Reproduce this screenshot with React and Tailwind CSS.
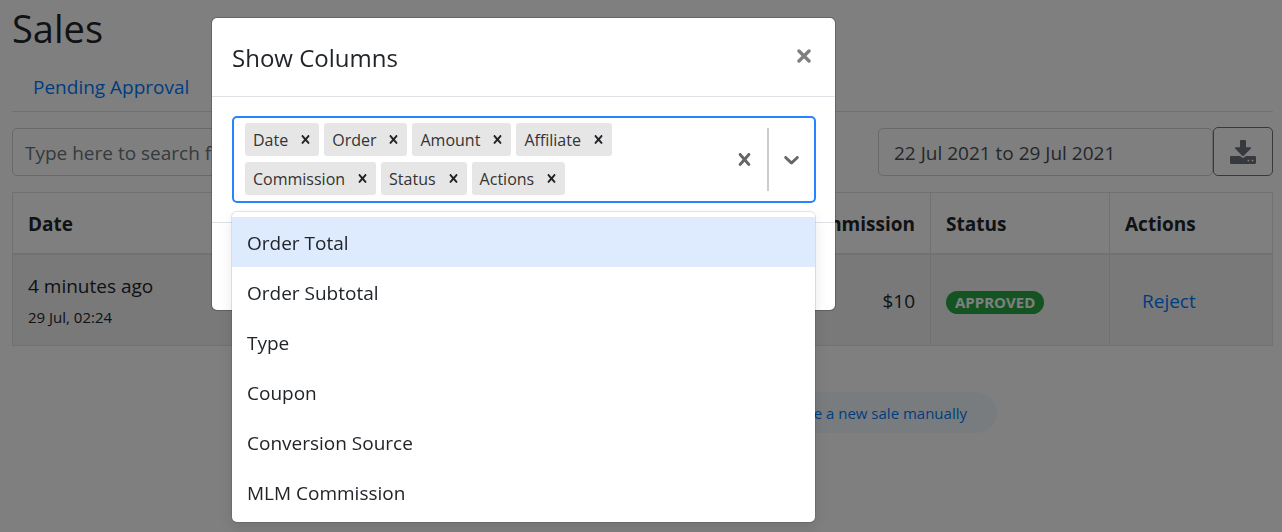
const CROSS =
  "M14.348 14.849c-0.469 0.469-1.229 0.469-1.697 0l-2.651-3.030-2.651 3.029c-0.469 0.469-1.229 0.469-1.697 0-0.469-0.469-0.469-1.229 0-1.697l2.758-3.15-2.759-3.152c-0.469-0.469-0.469-1.228 0-1.697s1.228-0.469 1.697 0l2.652 3.031 2.651-3.031c0.469-0.469 1.228-0.469 1.697 0s0.469 1.229 0 1.697l-2.758 3.152 2.758 3.15c0.469 0.469 0.469 1.229 0 1.698z";
const CHEVRON =
  "M4.516 7.548c0.436-0.446 1.043-0.481 1.576 0l3.908 3.747 3.908-3.747c0.533-0.481 1.141-0.446 1.574 0 0.436 0.445 0.408 1.197 0 1.615-0.406 0.418-4.695 4.502-4.695 4.502-0.217 0.223-0.502 0.335-0.787 0.335s-0.57-0.112-0.789-0.335c0 0-4.287-4.084-4.695-4.502s-0.436-1.17 0-1.615z";

const selected = ["Date", "Order", "Amount", "Affiliate", "Commission", "Status", "Actions"];
const options = ["Order Total", "Order Subtotal", "Type", "Coupon", "Conversion Source", "MLM Commission"];

function Icon({ path, className }) {
  return (
    <svg viewBox="0 0 20 20" fill="currentColor" aria-hidden="true" className={className}>
      <path d={path} />
    </svg>
  );
}

function DownloadIcon() {
  return (
    <svg viewBox="0 0 26 24" fill="currentColor" aria-hidden="true" className="h-6 w-[26px]">
      <path d="M11 0h4a1 1 0 0 1 1 1v6.200h4.200c.9 0 1.200.8.700 1.400l-7.100 7.100c-.5.5-1.100.5-1.600 0L5.100 8.600c-.5-.6-.2-1.400.7-1.400H10V1a1 1 0 0 1 1-1z" />
      <path
        fillRule="evenodd"
        d="M1.200 16h8.900l1.500 1.300c.8.700 2 .7 2.800 0L15.900 16h8.900c.7 0 1.200.5 1.200 1.200v5.600c0 .7-.5 1.200-1.200 1.200H1.200C.5 24 0 23.500 0 22.800v-5.600C0 16.500.5 16 1.200 16zM18.400 19.700a.9.9 0 1 0 0 1.800.9.900 0 0 0 0-1.800zM22.600 19.700a.9.900 0 1 0 0 1.800.9.900 0 0 0 0-1.800z"
      />
    </svg>
  );
}

function SalesPage() {
  return (
    <main className="px-3 pr-[9px]">
      <h1 className="pt-1 text-[38px] leading-12">Sales</h1>
      <nav className="mt-3 flex border-b border-[#dee2e6] px-[21px]">
        <a href="#pending" className="pt-2 pb-2 text-[19px] leading-[31px] text-[#007bff]">
          Pending Approval
        </a>
      </nav>
      <div className="mt-[15px] flex items-end justify-between">
        <input
          type="search"
          aria-label="Search sales"
          placeholder="Type here to search for a sale"
          className="h-12 w-[420px] rounded-[5px] border border-[#ced4da] px-3 pt-[2px] text-[19px] text-[#495057] placeholder:text-[#6c757d]"
        />
        <div className="flex items-end">
          <input
            type="text"
            aria-label="Date range"
            defaultValue="22 Jul 2021 to 29 Jul 2021"
            className="h-12 w-[335px] rounded-[5px] border border-[#ced4da] px-[15px] pt-[2px] text-[19px] text-[#495057]"
          />
          <button
            type="button"
            aria-label="Download"
            className="flex h-[49px] w-[60px] items-center justify-center rounded-[5px] border border-[#6c757d] text-[#6c757d]"
          >
            <DownloadIcon />
          </button>
        </div>
      </div>
      <table className="mt-4 w-full table-fixed border-collapse border border-[#dee2e6] text-[19px]">
        <thead>
          <tr className="h-[61px] border-b-2 border-[#dee2e6] text-left">
            <th className="px-[15px] pt-[2px]">Date</th>
            <th className="w-[160px] px-4 pt-[2px]">Order</th>
            <th className="w-[140px] px-4 pt-[2px]">Amount</th>
            <th className="w-[140px] px-4 pt-[2px]">Affiliate</th>
            <th className="w-[158px] border-r border-[#dee2e6] px-[15px] pt-[2px] text-right">Commission</th>
            <th className="w-[179px] border-r border-[#dee2e6] px-[15px] pt-[2px]">Status</th>
            <th className="w-[163px] px-[15px] pt-[2px]">Actions</th>
          </tr>
        </thead>
        <tbody>
          <tr className="h-[92px] bg-[#f2f2f2]">
            <td className="px-[15px] pt-1">
              <div className="leading-[30px]">4 minutes ago</div>
              <div className="text-[15px] leading-8">29 Jul, 02:24</div>
            </td>
            <td />
            <td />
            <td />
            <td className="border-r border-[#dee2e6] px-[15px] pt-[2px] text-right">$10</td>
            <td className="border-r border-[#dee2e6] px-[15px] pt-[2px]">
              <span className="inline-block rounded-full bg-[#28a745] px-[9px] align-middle text-[15px] leading-[23px] font-bold text-white">
                APPROVED
              </span>
            </td>
            <td className="px-8 pt-[2px]">
              <a href="#reject" className="text-[#007bff]">
                Reject
              </a>
            </td>
          </tr>
        </tbody>
      </table>
      <div className="mt-[46px] flex justify-center">
        <a
          href="#new-sale"
          className="flex h-[41px] w-full max-w-[709px] items-center justify-end rounded-full bg-[#f3f8fd] px-[30px] pt-[2px] text-[15px] text-[#007bff]"
        >
          Create a new sale manually
        </a>
      </div>
    </main>
  );
}

function ColumnSelect() {
  return (
    <div className="relative">
      <div className="flex rounded-[5px] border-2 border-[#2684ff] bg-white">
        <div className="flex flex-1 flex-wrap gap-x-[5px] gap-y-[6px] pt-[5px] pb-[6px] pl-[11px]">
          {selected.map((name) => (
            <span key={name} className="flex h-[33px] items-center rounded-[3px] bg-[#e6e6e6] pl-2 text-[16px] text-[#333333]">
              {name}
              <button type="button" aria-label={`Remove ${name}`} className="flex h-full items-center pr-[5px] pb-[1px] pl-[9px] text-[#212529]">
                <Icon path={CROSS} className="size-[17px]" />
              </button>
            </span>
          ))}
        </div>
        <div className="flex items-center text-[#666666]">
          <button type="button" aria-label="Clear all" className="px-[10px]">
            <Icon path={CROSS} className="size-[25px]" />
          </button>
          <span className="my-[10px] w-[2px] self-stretch bg-[#cccccc]" />
          <button type="button" aria-label="Toggle options" className="px-[10px]">
            <Icon path={CHEVRON} className="size-[25px]" />
          </button>
        </div>
      </div>
      <ul
        role="listbox"
        aria-label="Columns"
        className="absolute top-full right-[1px] left-0 mt-[9px] rounded-[5px] bg-white py-[5px] shadow-[0_0_0_1px_rgba(0,0,0,0.1),0_5px_14px_rgba(0,0,0,0.1)]"
      >
        {options.map((name, i) => (
          <li
            key={name}
            role="option"
            aria-selected={i === 0}
            className={
              i === 0
                ? "bg-[#deebff] px-[15px] pt-[2px] text-[19px] leading-[48px]"
                : "px-[15px] pt-[2px] text-[19px] leading-[48px]"
            }
          >
            {name}
          </li>
        ))}
      </ul>
    </div>
  );
}

export default function App() {
  return (
    <div className="min-h-screen overflow-hidden bg-white font-['Open_Sans',sans-serif] text-[#212529]">
      <SalesPage />
      <div className="fixed inset-0 bg-black/50 pt-[17px] pl-[211px]">
        <section
          role="dialog"
          aria-labelledby="dialog-title"
          className="w-full max-w-[625px] rounded-[6px] border border-black/20 bg-white bg-clip-padding"
        >
          <header className="flex items-center justify-between border-b border-[#dee2e6] px-5 pt-[21px] pb-[19px]">
            <h2 id="dialog-title" className="text-[24px] leading-[38px]">
              Show Columns
            </h2>
            <button type="button" aria-label="Close" className="pr-1 pb-1 text-[#808080]">
              <svg viewBox="0 0 14 14" className="size-[14px]" stroke="currentColor" strokeWidth="3.4" strokeLinecap="round" aria-hidden="true">
                <path d="M2 2l10 10M12 2L2 12" />
              </svg>
            </button>
          </header>
          <div className="py-[19px] pr-[19px] pl-5">
            <ColumnSelect />
          </div>
          <footer className="h-[88px] border-t border-[#dee2e6]" />
        </section>
      </div>
    </div>
  );
}
